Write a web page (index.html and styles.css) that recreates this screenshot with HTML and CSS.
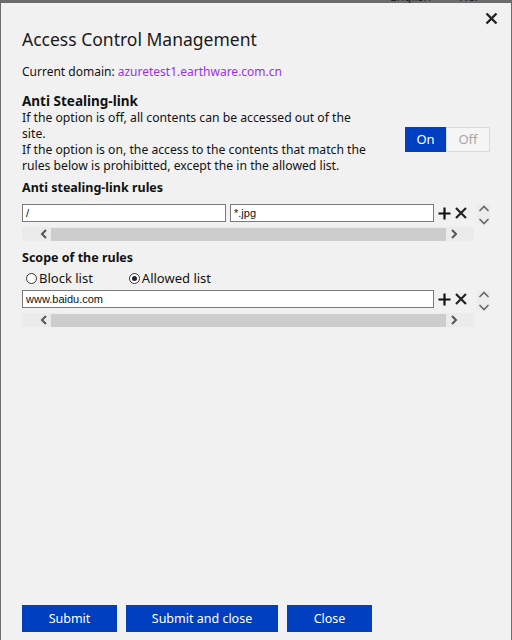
FILE: index.html
```html
<!DOCTYPE html>
<html>
<head>
<meta charset="utf-8">
<link rel="stylesheet" href="styles.css">
</head>
<body>
<div class="backdrop">
  <div class="behind">English&nbsp;&nbsp;&nbsp;&nbsp;&nbsp;&nbsp;&nbsp;&nbsp;&nbsp;Hel</div>
  <div class="dialog">
    <button class="close-x" aria-label="close">
      <svg width="13" height="13" viewBox="0 0 13 13"><path d="M1.5 1.5 L11.5 11.5 M11.5 1.5 L1.5 11.5" stroke="#222" stroke-width="2.4" fill="none"/></svg>
    </button>
    <h1 class="title">Access Control Management</h1>
    <p class="domain">Current domain: <a class="link">azuretest1.earthware.com.cn</a></p>

    <div class="anti">
      <div class="anti-text">
        <h2 class="sec">Anti Stealing-link</h2>
        <p class="desc">If the option is off, all contents can be accessed out of the site.<br>If the option is on, the access to the contents that match the rules below is prohibitted, except the in the allowed list.</p>
      </div>
      <div class="toggle">
        <span class="tg on">On</span><span class="tg off">Off</span>
      </div>
    </div>

    <h3 class="sub">Anti stealing-link rules</h3>
    <div class="rule">
      <div class="rule-main">
        <div class="row">
          <input class="inp half" value="/">
          <input class="inp half" value="*.jpg">
          <span class="ic plus"><svg width="13" height="13" viewBox="0 0 13 13"><path d="M6.5 0.5V12.5M0.5 6.5H12.5" stroke="#111" stroke-width="2.2"/></svg></span>
          <span class="ic del"><svg width="12" height="12" viewBox="0 0 12 12"><path d="M1 1L11 11M11 1L1 11" stroke="#222" stroke-width="2.2"/></svg></span>
        </div>
        <div class="hscroll">
          <span class="arr"><svg width="8" height="10" viewBox="0 0 8 10"><path d="M6 1L2 5L6 9" stroke="#555" stroke-width="2" fill="none"/></svg></span>
          <span class="thumb"></span>
          <span class="arr"><svg width="8" height="10" viewBox="0 0 8 10"><path d="M2 1L6 5L2 9" stroke="#555" stroke-width="2" fill="none"/></svg></span>
        </div>
      </div>
      <div class="updown">
        <svg width="12" height="22" viewBox="0 0 12 22"><path d="M1.5 7L6 2.5L10.5 7" stroke="#666" stroke-width="1.6" fill="none"/><path d="M1.5 15L6 19.5L10.5 15" stroke="#666" stroke-width="1.6" fill="none"/></svg>
      </div>
    </div>

    <h3 class="sub scope">Scope of the rules</h3>
    <div class="radios">
      <label class="radio"><span class="dot"></span>Block list</label>
      <label class="radio"><span class="dot checked"></span>Allowed list</label>
    </div>
    <div class="rule">
      <div class="rule-main">
        <div class="row">
          <input class="inp full" value="www.baidu.com">
          <span class="ic plus"><svg width="13" height="13" viewBox="0 0 13 13"><path d="M6.5 0.5V12.5M0.5 6.5H12.5" stroke="#111" stroke-width="2.2"/></svg></span>
          <span class="ic del"><svg width="12" height="12" viewBox="0 0 12 12"><path d="M1 1L11 11M11 1L1 11" stroke="#222" stroke-width="2.2"/></svg></span>
        </div>
        <div class="hscroll">
          <span class="arr"><svg width="8" height="10" viewBox="0 0 8 10"><path d="M6 1L2 5L6 9" stroke="#555" stroke-width="2" fill="none"/></svg></span>
          <span class="thumb"></span>
          <span class="arr"><svg width="8" height="10" viewBox="0 0 8 10"><path d="M2 1L6 5L2 9" stroke="#555" stroke-width="2" fill="none"/></svg></span>
        </div>
      </div>
      <div class="updown">
        <svg width="12" height="22" viewBox="0 0 12 22"><path d="M1.5 7L6 2.5L10.5 7" stroke="#666" stroke-width="1.6" fill="none"/><path d="M1.5 15L6 19.5L10.5 15" stroke="#666" stroke-width="1.6" fill="none"/></svg>
      </div>
    </div>

    <div class="spacer"></div>
    <div class="buttons">
      <button class="btn w95">Submit</button>
      <button class="btn w152">Submit and close</button>
      <button class="btn w85">Close</button>
    </div>
  </div>
</div>
</body>
</html>
```
FILE: styles.css
```css
* { box-sizing: border-box; }
html, body { margin: 0; padding: 0; }
body {
  width: 512px;
  height: 640px;
  overflow: hidden;
  background: #6b6b6b;
  font-family: "Noto Sans", "Open Sans", sans-serif;
  color: #111;
}
.backdrop {
  position: relative;
  width: 512px;
  height: 640px;
  padding: 3px 1px 0 1px;
}
.behind {
  position: absolute;
  top: -12px;
  left: 390px;
  font-size: 12px;
  color: #222;
  white-space: nowrap;
}
.dialog {
  position: relative;
  background: #f1f1f1;
  height: 637px;
  padding: 0 21px 8px 21px;
  display: flex;
  flex-direction: column;
}
.close-x {
  position: absolute;
  top: 9px;
  right: 13px;
  border: 0;
  background: none;
  padding: 0;
  width: 13px;
  height: 13px;
  display: flex;
}
.title {
  margin: 24px 0 0 0;
  font-size: 17.5px;
  font-weight: 400;
  line-height: 24px;
  color: #1a1a1a;
}
.domain {
  margin: 13px 0 0 0;
  font-size: 12px;
  line-height: 16px;
}
.link { color: #9a32e6; }
.anti {
  display: flex;
  align-items: center;
  margin-top: 12px;
}
.anti-text { width: 348px; }
.sec {
  margin: 0;
  font-size: 13.5px;
  font-weight: 700;
  line-height: 18px;
}
.desc {
  margin: 0;
  font-size: 12.2px;
  line-height: 16px;
}
.toggle {
  margin-left: auto;
  margin-right: 0;
  display: flex;
  margin-top: 12px;
}
.tg {
  width: 42px;
  height: 25px;
  display: flex;
  align-items: center;
  justify-content: center;
  font-size: 13px;
}
.tg.on { background: #0040c0; color: #fff; width: 41px; }
.tg.off { background: #f5f5f5; color: #a8a8a8; border: 1px solid #dadada; width: 44px; }
.sub {
  margin: 6px 0 0 0;
  font-size: 12.5px;
  font-weight: 700;
  line-height: 16px;
}
.rule {
  display: flex;
  margin-top: 8px;
}
.rule-main { width: 452px; }
.row {
  display: flex;
  align-items: center;
  height: 18px;
}
.inp {
  height: 18px;
  border: 1px solid #7a7a7a;
  background: #fff;
  font-family: "Liberation Sans", Arial, sans-serif;
  font-size: 11px;
  padding: 0 3px;
  margin: 0;
  color: #111;
  outline: none;
}
.inp.half { width: 204px; margin-right: 4px; }
.inp.half + .inp.half { margin-right: 2px; }
.inp.full { width: 412px; margin-right: 2px; }
.ic { display: flex; width: 16px; justify-content: center; }
.ic.del { margin-left: 1px; }
.hscroll {
  margin-top: 5px;
  height: 14px;
  background: #ebebeb;
  display: flex;
  align-items: center;
  padding-left: 14px;
  width: 452px;
}
.arr { display: flex; width: 15px; justify-content: center; }
.thumb {
  width: 395px;
  height: 13px;
  background: #cdcdcd;
}
.updown {
  margin-left: 3px;
  width: 16px;
  height: 20px;
  display: flex;
  justify-content: center;
  background: #ececec;
}
.scope { margin-top: 9px; }
.radios {
  display: flex;
  align-items: center;
  margin-top: 3px;
  padding-left: 4px;
  font-size: 13px;
  line-height: 18px;
}
.radio {
  display: flex;
  align-items: center;
}
.radio + .radio { margin-left: 36px; }
.dot {
  width: 11px;
  height: 11px;
  border: 1px solid #333;
  border-radius: 50%;
  background: #fff;
  margin-right: 2px;
  position: relative;
}
.dot.checked::after {
  content: "";
  position: absolute;
  left: 2px;
  top: 2px;
  width: 5px;
  height: 5px;
  border-radius: 50%;
  background: #222;
}
.radios + .rule { margin-top: 3px; }
.spacer { flex: 1; }
.buttons {
  display: flex;
  gap: 9px;
}
.btn {
  height: 27px;
  background: #0040c0;
  color: #fff;
  border: 0;
  font-family: "Noto Sans", "Open Sans", sans-serif;
  font-size: 12.5px;
  padding: 0;
}
.w95 { width: 95px; }
.w152 { width: 152px; }
.w85 { width: 85px; }
```
